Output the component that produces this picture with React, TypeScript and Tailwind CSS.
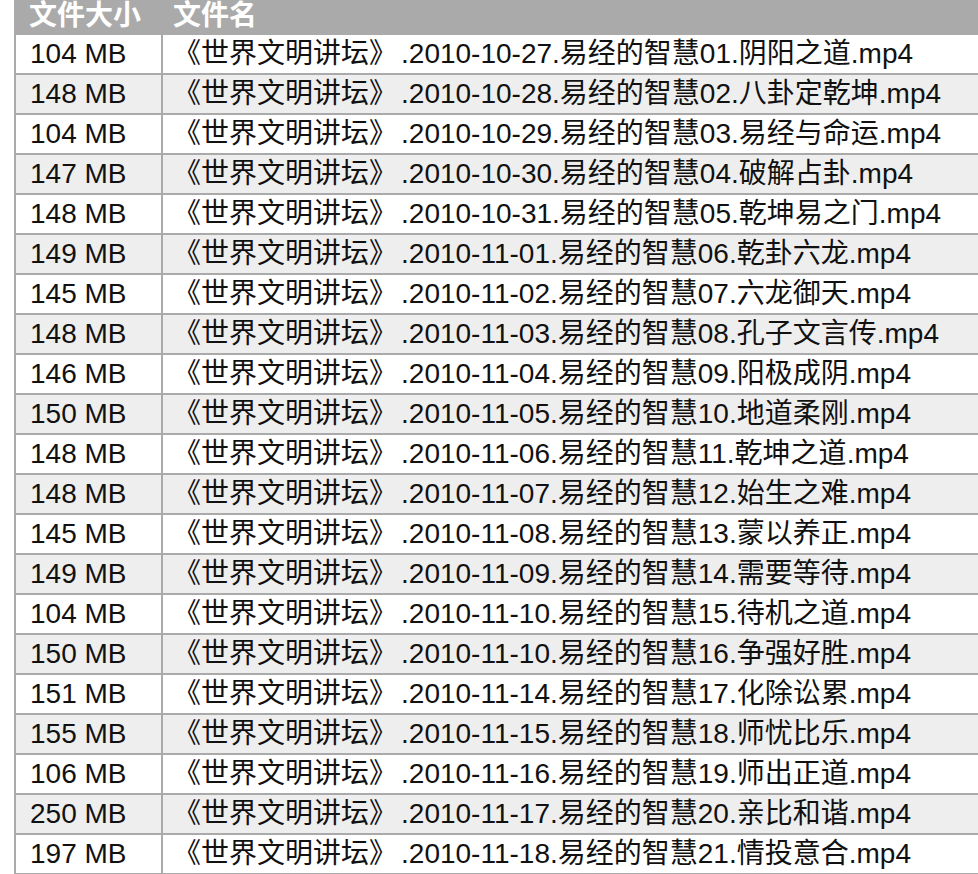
const files: [string, string, string, string][] = [
  ["104 MB", "2010-10-27", "01", "阴阳之道"],
  ["148 MB", "2010-10-28", "02", "八卦定乾坤"],
  ["104 MB", "2010-10-29", "03", "易经与命运"],
  ["147 MB", "2010-10-30", "04", "破解占卦"],
  ["148 MB", "2010-10-31", "05", "乾坤易之门"],
  ["149 MB", "2010-11-01", "06", "乾卦六龙"],
  ["145 MB", "2010-11-02", "07", "六龙御天"],
  ["148 MB", "2010-11-03", "08", "孔子文言传"],
  ["146 MB", "2010-11-04", "09", "阳极成阴"],
  ["150 MB", "2010-11-05", "10", "地道柔刚"],
  ["148 MB", "2010-11-06", "11", "乾坤之道"],
  ["148 MB", "2010-11-07", "12", "始生之难"],
  ["145 MB", "2010-11-08", "13", "蒙以养正"],
  ["149 MB", "2010-11-09", "14", "需要等待"],
  ["104 MB", "2010-11-10", "15", "待机之道"],
  ["150 MB", "2010-11-10", "16", "争强好胜"],
  ["151 MB", "2010-11-14", "17", "化除讼累"],
  ["155 MB", "2010-11-15", "18", "师忧比乐"],
  ["106 MB", "2010-11-16", "19", "师出正道"],
  ["250 MB", "2010-11-17", "20", "亲比和谐"],
  ["197 MB", "2010-11-18", "21", "情投意合"],
];

export default function App() {
  return (
    <div
      className="w-[978px] h-[874px] overflow-hidden bg-white pl-[14px] text-[#111]"
      style={{ fontFamily: '"Liberation Sans", "Noto Sans CJK SC", sans-serif' }}
    >
      <div className="w-[1000px] border-l-2 border-[#aaaaaa]">
        <div className="flex h-[35px] bg-[#aaaaaa] text-white font-bold text-[28px] leading-[31px]">
          <div className="w-[145px] shrink-0 pl-[13px]">文件大小</div>
          <div className="pl-[12px]">文件名</div>
        </div>
        {files.map(([size, date, no, title], i) => (
          <div
            key={i}
            className={`flex h-[40px] border-b-2 border-[#aaaaaa] text-[28px] ${
              i % 2 === 1 ? "bg-[#eeeeee]" : "bg-white"
            }`}
          >
            <div className="w-[147px] shrink-0 flex items-center pl-[14px] border-r-2 border-[#aaaaaa]">
              {size}
            </div>
            <div className="flex items-center pl-[10px] whitespace-nowrap">
              《世界文明讲坛<span className="mr-[4px]">》</span>.{date}.易经的智慧{no}.{title}.mp4
            </div>
          </div>
        ))}
      </div>
    </div>
  );
}
